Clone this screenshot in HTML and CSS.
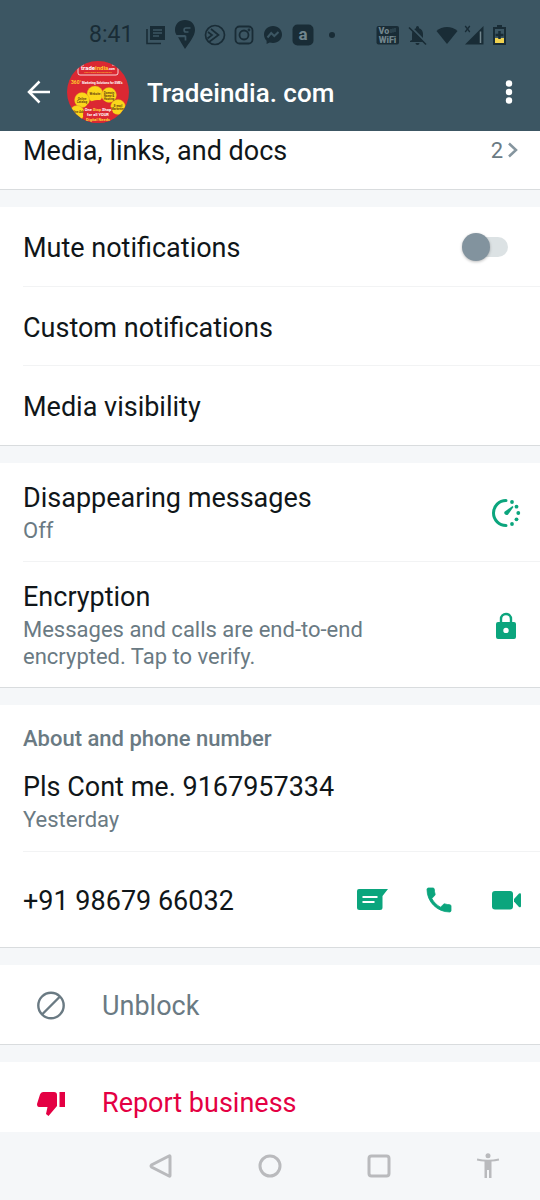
FILE: index.html
```html
<!DOCTYPE html>
<html lang="en">
<head>
<meta charset="utf-8">
<meta name="viewport" content="width=device-width, initial-scale=1">
<title>Tradeindia. com</title>
<link rel="stylesheet" href="styles.css">
</head>
<body>
<div class="screen">
  <header class="top">
    <div class="status">
      <span class="clock">8:41</span>
      <div class="apps">
        <svg width="22" height="22" viewBox="0 0 22 22"><path d="M5 2h15v14H5z" fill="currentColor"/><path d="M8 6h9M8 9h9M8 12h6" stroke="#3c5663" stroke-width="1.4"/><path d="M2 5v14.500h14" fill="none" stroke="currentColor" stroke-width="1.6"/></svg>
        <svg width="22" height="32" viewBox="0 0 22 32"><path d="M11 1C5 1 1 5 1 11c0 2 .6 3.500 1.500 5h9v2H4c2 4 4.500 8 7 12 4-6 10-13 10-19C21 5 17 1 11 1z" fill="currentColor"/><path d="M16.500 9H12c-2.500 0-2.500 4 0 4h2.500M3 17.500h8.500v4" fill="none" stroke="#3c5663" stroke-width="1.700"/></svg>
        <svg width="22" height="22" viewBox="0 0 22 22" fill="none" stroke="currentColor" stroke-width="1.700"><circle cx="11" cy="11" r="9.500"/><path d="M7 5l7.500 6L5 18M4 8l4 3-4.500 3.500"/></svg>
        <svg width="22" height="22" viewBox="0 0 22 22" fill="none" stroke="currentColor" stroke-width="1.800"><rect x="2.500" y="2.500" width="17" height="17" rx="4"/><circle cx="11" cy="11" r="4.500"/><circle cx="16" cy="6" r=".5"/></svg>
        <svg width="22" height="22" viewBox="0 0 22 22"><path d="M11 2c-5.300 0-9 3.800-9 8.600 0 2.600 1 4.600 2.600 6.100V20l3.100-1.500c1 .3 2.200.5 3.300.5 5.300 0 9-3.600 9-8.400S16.300 2 11 2z" fill="currentColor"/><path d="M5.500 13.500L9.200 9l3.100 3L16.500 8" fill="none" stroke="#3c5663" stroke-width="2"/></svg>
        <svg width="22" height="22" viewBox="0 0 22 22"><rect x=".5" y=".5" width="21" height="21" rx="5" fill="currentColor"/><text x="11" y="16" text-anchor="middle" class="app-letter">a</text></svg>
        <svg width="22" height="22" viewBox="0 0 22 22"><circle cx="11" cy="11" r="3" fill="currentColor"/></svg>
      </div>
      <div class="system">
        <svg width="24" height="22" viewBox="0 0 24 22"><rect x=".5" y="2" width="22.500" height="18.500" rx="2" fill="currentColor"/><text x="2.500" y="10" class="net-label">Vo</text><path d="M15 5v4M17 4.500v4M19 4v4" stroke="#3c5663" stroke-width="1"/><text x="11.500" y="18.500" text-anchor="middle" class="net-label">WiFi</text></svg>
        <svg width="24" height="22" viewBox="0 0 24 22"><path d="M6 16V10c0-3 1.600-5 4-5.700V3.500a1.500 1.500 0 0 1 3 0v.8c2.500.7 4 2.700 4 5.700v5l2 2v1H4v-1z" fill="currentColor"/><path d="M9.500 19h4a2 2 0 0 1-4 0z" fill="currentColor"/><path d="M4.200 2.500L21.500 20" stroke="#3c5663" stroke-width="2"/><path d="M3 3.500L20 20.500" stroke="currentColor" stroke-width="1.600"/></svg>
        <svg width="22" height="22" viewBox="0 0 22 22"><path d="M.5 7C6 1.700 16 1.700 21.500 7L11 20z" fill="currentColor"/></svg>
        <svg width="20" height="22" viewBox="0 0 20 22"><path d="M1 20.500h18.500V2z" fill="currentColor"/><path d="M16.500 7.500V19" stroke="#71858d" stroke-width="1.500"/><path d="M1.200 2l4.600 6M5.800 2L1.200 8" stroke="currentColor" stroke-width="1.300"/></svg>
        <svg width="18" height="22" viewBox="0 0 18 22"><path d="M7 1h5v2h4v18H3V3h4z" fill="currentColor"/><path d="M5 5h9v10H5z" fill="#3c5663"/><path d="M5 14h9v5H5z" fill="#f0d24f"/><path d="M9.500 7v8M5.500 11h8" stroke="currentColor" stroke-width="2.500"/></svg>
      </div>
    </div>
    <div class="appbar">
      <button class="icon-button" aria-label="Back"><svg width="24" height="24" viewBox="0 0 24 24" fill="none" stroke="currentColor" stroke-width="2.500"><path d="M23 12H2M12.500 1.500L2 12l10.500 10.500"/></svg></button>
      <svg class="avatar" width="62" height="62" viewBox="0 0 62 62" role="img" aria-label="Tradeindia profile picture">
        <clipPath id="disc"><circle cx="31" cy="31" r="31"/></clipPath>
        <g clip-path="url(#disc)">
          <rect width="62" height="62" fill="#db2832"/>
          <path d="M17 4h-4q-2 0-2 2v6q0 2 2 2h36q2 0 2-2V6q0-2-2-2h-4" fill="none" stroke="#fff" stroke-width=".8"/>
          <text x="31" y="9" text-anchor="middle" class="logo-text">trade<tspan fill="#ffcb2c">india</tspan><tspan class="logo-suffix">.com</tspan></text>
          <text x="31" y="12" text-anchor="middle" class="tiny">India's largest B2B marketplace</text>
          <text x="4" y="23" class="degree">360°</text>
          <text x="15" y="23" class="caption">Marketing Solutions for SME's</text>
          <g fill="#fbd71b" stroke="#d99b20" stroke-width=".4"><circle cx="28" cy="33" r="8"/><circle cx="42" cy="34" r="7.500"/><circle cx="15" cy="39" r="7.500"/><circle cx="51" cy="46" r="7.500"/><circle cx="10" cy="52" r="7.500"/></g>
          <g class="bubble" text-anchor="middle"><text x="28" y="34">Website</text><text x="42" y="33">Domain</text><text x="42" y="36">Name &amp;</text><text x="42" y="39">Hosting</text><text x="15" y="39">Online</text><text x="15" y="42">Catalog</text><text x="51" y="46">E-mail</text><text x="51" y="49">Marketing</text><text x="10" y="52">Online Ads</text></g>
          <circle cx="31" cy="54" r="15" fill="#db2832"/>
          <g class="pitch" text-anchor="middle"><text x="31" y="50">One <tspan fill="#ffdc35">Stop</tspan> Shop</text><text x="31" y="55">for all YOUR</text><text x="31" y="60" fill="#ffdc35">Digital Needs</text></g>
        </g>
      </svg>
      <h1 class="name">Tradeindia. com</h1>
      <button class="icon-button" aria-label="More options"><svg width="12" height="26" viewBox="0 0 12 26" fill="currentColor"><circle cx="6" cy="4.500" r="3.200"/><circle cx="6" cy="13" r="3.200"/><circle cx="6" cy="21.500" r="3.200"/></svg></button>
    </div>
  </header>

  <main class="content">
    <section class="card">
      <a class="row media" href="#media"><span class="title">Media, links, and docs</span><span class="count">2<svg width="12" height="16" viewBox="0 0 12 16" fill="none" stroke="#85959e" stroke-width="2.500"><path d="M2 1.500L9 8l-7 6.500"/></svg></span></a>
    </section>

    <section class="card options">
      <div class="row single"><label class="title" for="mute">Mute notifications</label><input class="switch" type="checkbox" role="switch" id="mute"></div>
      <a class="row single" href="#custom"><span class="title">Custom notifications</span></a>
      <a class="row single" href="#visibility"><span class="title">Media visibility</span></a>
    </section>

    <section class="card">
      <a class="row detail" href="#disappearing">
        <span class="text"><span class="title">Disappearing messages</span><span class="sub">Off</span></span>
        <svg width="30" height="30" viewBox="0 0 30 30"><path d="M15 2.500a12.500 12.500 0 0 0 0 25" fill="none" stroke="currentColor" stroke-width="3" stroke-linecap="round"/><g fill="currentColor"><circle cx="21" cy="4" r="1.900"/><circle cx="25.500" cy="8.700" r="1.900"/><circle cx="27.300" cy="15" r="1.900"/><circle cx="25.500" cy="21.300" r="1.900"/><circle cx="21" cy="26" r="1.900"/><path d="M21.500 8l1 1-5.200 7.200c-1.600 2-5 .2-3.800-2.500z"/></g></svg>
      </a>
      <a class="row detail" href="#encryption">
        <span class="text"><span class="title">Encryption</span><span class="sub">Messages and calls are end-to-end encrypted. Tap to verify.</span></span>
        <svg width="30" height="30" viewBox="0 0 30 30"><path d="M10 11.500V8a5 5 0 0 1 10 0v3.500" fill="none" stroke="currentColor" stroke-width="2.400"/><path fill-rule="evenodd" d="M7 11h16q2 0 2 2v13q0 2-2 2H7q-2 0-2-2V13q0-2 2-2zm8 5.700a2.700 2.700 0 1 0 0 5.400 2.700 2.700 0 1 0 0-5.400z" fill="currentColor"/></svg>
      </a>
    </section>

    <section class="card">
      <h2 class="heading">About and phone number</h2>
      <div class="row about"><span class="text"><span class="title">Pls Cont me. 9167957334</span><span class="sub">Yesterday</span></span></div>
      <div class="row phone">
        <span class="title">+91 98679 66032</span>
        <div class="actions">
          <button class="icon-button" aria-label="Message"><svg width="32" height="32" viewBox="0 0 32 32"><path d="M3 5h29l-5.500 7v11.500q0 2.500-2.500 2.500H3.500Q1 26 1 23.500V7q0-2 2-2z" fill="currentColor"/><path d="M6.500 13h15M6.500 18h12" stroke="#fff" stroke-width="2.200"/></svg></button>
          <button class="icon-button" aria-label="Voice call"><svg width="32" height="32" viewBox="0 0 24 24" fill="currentColor"><path d="M6.620 10.790c1.440 2.830 3.760 5.140 6.590 6.590l2.200-2.200c.270-.270.670-.360 1.020-.240 1.120.370 2.330.570 3.570.570.550 0 1 .450 1 1V20c0 .550-.450 1-1 1C10.610 21 3 13.390 3 4c0-.550.450-1 1-1h3.500c.550 0 1 .450 1 1 0 1.250.200 2.450.570 3.570.110.350.030.740-.250 1.020z" stroke="currentColor" stroke-width=".6"/></svg></button>
          <button class="icon-button" aria-label="Video call"><svg width="32" height="32" viewBox="0 0 32 32" fill="currentColor"><rect x="2" y="7" width="21" height="18.500" rx="3"/><path d="M24 15l5-5.500q2-1 2 1V22q0 2-2 1l-5-5.500z"/></svg></button>
        </div>
      </div>
    </section>

    <section class="card">
      <button class="row command"><svg width="32" height="32" viewBox="0 0 32 32" fill="none" stroke="currentColor" stroke-width="2.400"><circle cx="16" cy="15.500" r="12.700"/><path d="M7 24.500l18-18"/></svg><span>Unblock</span></button>
    </section>

    <section class="card last">
      <button class="row command danger"><svg width="32" height="32" viewBox="0 0 32 32" fill="currentColor"><path d="M8 5h11q3 0 3 3v11L13.500 29 11 27l1.500-7H4q-2 0-2-3l3-9.500Q5.800 5 8 5zM24.500 5H30v15h-5.500z"/></svg><span>Report business</span></button>
    </section>
  </main>

  <nav class="navbar" aria-label="System navigation">
    <button class="icon-button" aria-label="Back"><svg width="26" height="26" viewBox="0 0 26 26" class="nav-icon"><path d="M22 3.500v19q0 1-1 .5L3.500 14q-1-1 0-2L21 3q1-.5 1 .5z"/></svg></button>
    <button class="icon-button" aria-label="Home"><svg width="26" height="26" viewBox="0 0 26 26" class="nav-icon"><circle cx="13" cy="13" r="10"/></svg></button>
    <button class="icon-button" aria-label="Recent apps"><svg width="26" height="26" viewBox="0 0 26 26" class="nav-icon"><rect x="3" y="3" width="20" height="20" rx="2.500"/></svg></button>
    <button class="icon-button" aria-label="Accessibility"><svg width="26" height="26" viewBox="0 0 26 26" fill="#b9babd"><circle cx="13" cy="2.700" r="2.500"/><path d="M2.200 5.500Q13 8 23.800 5.500l.3 2Q20 8.300 16.500 8.500V25H14v-8h-2v8H9.500V8.500Q6 8.300 1.900 7.500z"/></svg></button>
  </nav>
</div>
</body>
</html>
```
FILE: styles.css
```css
* { box-sizing: border-box; }

body {
  margin: 0;
  background: #f5f7f9;
  color: #101619;
  font-family: Roboto, "Noto Sans", sans-serif;
}

svg { display: block; flex: none; }
a { color: inherit; text-decoration: none; }

button {
  border: 0;
  background: none;
  color: inherit;
  font: inherit;
  cursor: pointer;
}

.icon-button { display: flex; padding: 0; }

.screen {
  display: flex;
  flex-direction: column;
  min-height: 100vh;
}

.top {
  padding-top: 15px;
  background: #3c5663;
  color: #fff;
}

.status {
  display: flex;
  align-items: center;
  height: 40px;
  padding: 0 32px 0 89px;
  color: #192c36;
}

.clock { width: 52px; font-size: 23px; line-height: 28px; }

.apps {
  display: grid;
  grid-template-columns: repeat(7, 1fr);
  place-items: center;
  width: 206px;
}

.system { display: flex; gap: 6px; margin-left: auto; }

.app-letter { font-size: 17px; font-weight: 700; fill: #71858d; }
.net-label { font-size: 9px; font-weight: 900; fill: #71858d; }

.appbar {
  display: flex;
  align-items: center;
  height: 76px;
  padding: 0 25px 3px 27px;
}

.avatar { margin: 0 18px 0 16px; }

.logo-text { font-size: 6px; font-weight: 700; fill: #fff; }
.logo-suffix { font-size: 3px; fill: #fff; }
.tiny { font-size: 2px; fill: #ffcb2c; }
.degree { font-size: 5px; font-weight: 700; fill: #ffcb2c; }
.caption { font-size: 3px; font-weight: 700; fill: #fff; }
.bubble { font-size: 3px; font-weight: 700; fill: #6b4411; }
.pitch { font-size: 4px; font-weight: 700; fill: #fff; }

.name {
  flex: 1;
  margin: 0;
  padding-top: 2px;
  font-size: 26px;
  font-weight: 500;
  line-height: 32px;
}

.content {
  display: flex;
  flex: 1;
  flex-direction: column;
  gap: 17px;
}

.card {
  border-bottom: 1px solid #d9dcde;
  background: #fff;
}

.card.options { padding-bottom: 1px; }
.card.last { flex: 1; border-bottom: 0; }

.row {
  display: flex;
  align-items: center;
  justify-content: space-between;
  margin-left: 23px;
  padding-right: 19px;
}

.row + .row { border-top: 1px solid #f2f3f4; }

.title { font-size: 27px; line-height: 32px; }
.text { display: flex; flex-direction: column; gap: 3px; max-width: 380px; }
.sub { color: #6a7a83; font-size: 22px; line-height: 27px; }
.detail { color: #0ba57d; }
.detail .title { color: #101619; }

.media { padding: 4px 21px 22px 0; }
.count { display: flex; align-items: center; gap: 4px; padding-bottom: 2px; color: #6a7a83; font-size: 22px; line-height: 27px; }

.single { min-height: 79px; padding-right: 32px; }
.single .title { padding-top: 3px; }

.switch {
  appearance: none;
  display: flex;
  align-items: center;
  width: 46px;
  height: 20px;
  margin: 0;
  border-radius: 10px;
  background: linear-gradient(90deg, transparent 12px, #dce2e4 12px);
  cursor: pointer;
}

.switch::before {
  content: "";
  width: 28px;
  height: 28px;
  border-radius: 50%;
  background: #82939e;
  box-shadow: 0 1px 3px #0004;
}

.switch:checked { justify-content: flex-end; }

.detail { padding-top: 19px; padding-bottom: 17px; }

.heading {
  margin: 0;
  padding: 20px 23px 15px;
  color: #6a7a83;
  font-size: 22px;
  font-weight: 500;
  line-height: 27px;
}

.about { padding-top: 4px; padding-bottom: 18px; }
.phone { min-height: 96px; padding-right: 18px; }
.phone .title { padding-top: 2px; }
.actions { display: flex; gap: 35px; color: #0ba57d; }

.command {
  justify-content: flex-start;
  gap: 35px;
  width: 100%;
  min-height: 79px;
  margin: 0;
  padding: 2px 35px 0;
  color: #6a7a83;
  font-size: 27px;
  line-height: 32px;
}

.danger { min-height: 70px; padding-top: 12px; color: #e40043; }

.navbar {
  display: flex;
  align-items: center;
  justify-content: space-between;
  height: 68px;
  padding: 0 39px 0 148px;
}

.nav-icon { fill: none; stroke: #b9babd; stroke-width: 3px; }
```
